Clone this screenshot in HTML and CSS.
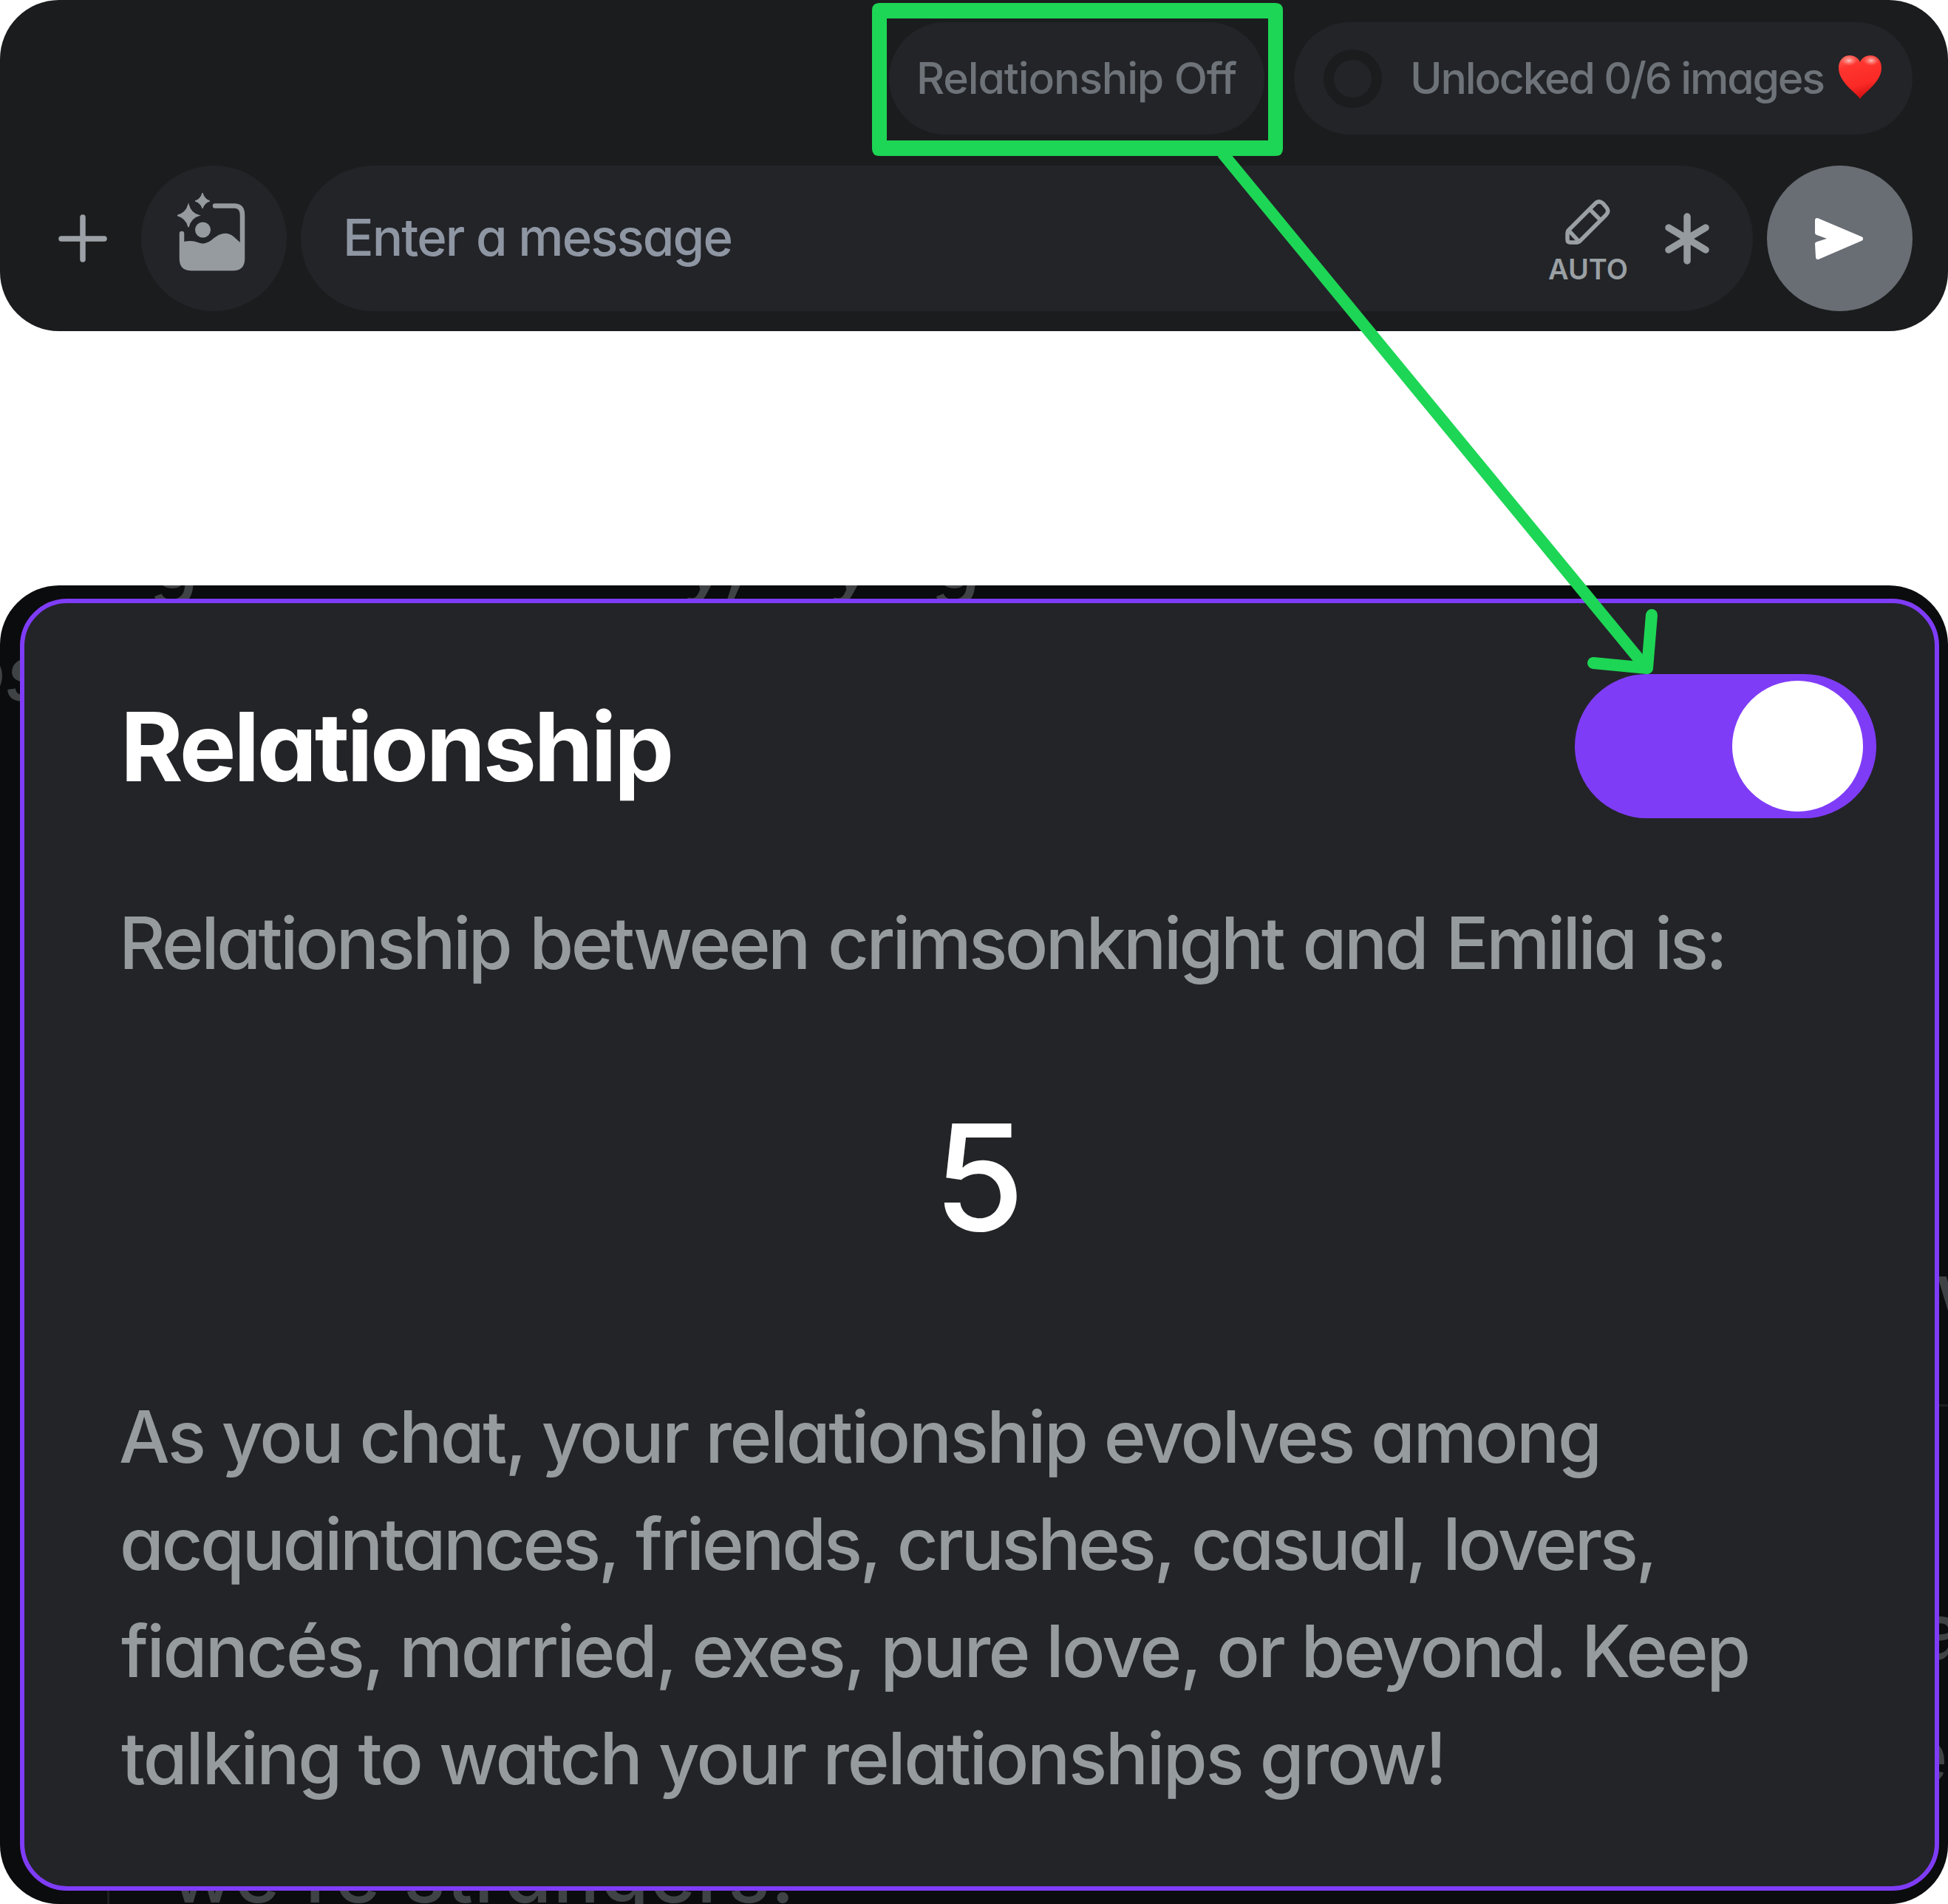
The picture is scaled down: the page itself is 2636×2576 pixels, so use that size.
FILE: index.html
```html
<!DOCTYPE html>
<html lang="en">
<head>
<meta charset="utf-8">
<title>Relationship setting</title>
<link rel="stylesheet" href="styles.css">
</head>
<body>
<main class="page">
  <section class="composer">
    <div class="chips">
      <div class="chip chip-relationship"><span class="chip-label label-off">Relationship Off</span></div>
      <div class="chip chip-images">
        <span class="ring"></span>
        <span class="chip-label label-unlocked">Unlocked 0/6 images</span>
        <svg class="heart" viewBox="0 0 60 62">
          <defs>
            <linearGradient id="heartFill" x1="0" y1="0" x2="0.3" y2="1">
              <stop offset="0" stop-color="#ff6a60"/><stop offset="0.3" stop-color="#ff352f"/><stop offset="0.75" stop-color="#fb2a26"/><stop offset="1" stop-color="#d81414"/>
            </linearGradient>
            <radialGradient id="heartShine"><stop offset="0" stop-color="#ffd0cb" stop-opacity=".9"/><stop offset="1" stop-color="#ff8a80" stop-opacity="0"/></radialGradient>
          </defs>
          <path fill="url(#heartFill)" d="M30 61C27 54 1 39 1 19C1 8 8 2 16 2C23 2 28 6 30 11C32 6 37 2 44 2C52 2 59 8 59 19C59 39 33 54 30 61Z"/>
          <ellipse cx="15" cy="9" rx="11" ry="7" fill="url(#heartShine)"/>
          <ellipse cx="45" cy="9" rx="11" ry="7" fill="url(#heartShine)"/>
        </svg>
      </div>
    </div>
    <div class="entry">
      <svg class="plus" viewBox="0 0 68 68"><path d="M34 5V62M5 34H63" fill="none" stroke="#9ba1a6" stroke-width="7.500" stroke-linecap="round"/></svg>
      <div class="round image-button">
        <svg viewBox="0 0 92 108" class="image-icon">
          <g fill="#969b9f">
            <path d="M15 16Q18 27.500 29 30.500Q18 33.500 15 46Q12 33.500 0 30.500Q12 27.500 15 16Z" stroke="#969b9f" stroke-width="1.500"/>
            <path d="M34 0Q36.500 8.500 44 11Q36.500 13.500 34 21Q31.500 13.500 24 11Q31.500 8.500 34 0Z" stroke="#969b9f" stroke-width="1"/>
            <circle cx="34.500" cy="50" r="10.500"/>
            <path d="M6 67Q18 63 28 67Q36 71 46 64C56 55 66 51 76 59L86 68V90Q86 103 74 103H19Q6 103 6 90Z"/>
          </g>
          <path d="M51 17.500H78Q88 18 88 30V89Q88 102 75 102H19Q6 102 6 89V55" fill="none" stroke="#969b9f" stroke-width="6.500" stroke-linecap="round"/>
        </svg>
      </div>
      <div class="field">
        <span class="placeholder">Enter a message</span>
        <div class="auto">
          <svg viewBox="0 0 62 62" class="pencil"><path d="M4 43L40 7Q45 1 51 6L56 12Q60 17 55 22L20 57Q18 59 14 59H7Q3 59 3 55V47Q3 44 4 43ZM33 14L48 29M5 43L18 57" fill="none" stroke="#9aa0a4" stroke-width="5.500" stroke-linejoin="round"/></svg>
          <span class="auto-label">AUTO</span>
        </div>
        <svg class="asterisk" viewBox="0 0 62 70"><path d="M31 5V65M6 20L56 50M56 20L6 50" fill="none" stroke="#969b9f" stroke-width="9.500" stroke-linecap="round"/></svg>
      </div>
      <div class="round send">
        <svg viewBox="0 0 68 60" class="send-icon"><path d="M4 5L63 30L5 55L4 37L26 30L4 22Z" fill="#fff" stroke="#fff" stroke-width="6" stroke-linejoin="round"/></svg>
      </div>
    </div>
  </section>

  <section class="stage">
    <div class="backdrop" aria-hidden="true">
      <span class="ghost slant g1">g</span>
      <span class="ghost slant g2">y,</span>
      <span class="ghost slant g3">y</span>
      <span class="ghost slant g4">g</span>
      <span class="ghost slant g5">os</span>
      <span class="ghost g6">w</span>
      <span class="ghost g7">a</span>
      <span class="ghost g8">e</span>
      <span class="ghost g9">we're strangers.</span>
      <span class="rule rule-right"></span>
      <span class="rule rule-bottom"></span>
    </div>
    <div class="modal">
      <header class="modal-head">
        <h1 class="title">Relationship</h1>
        <div class="toggle"><span class="knob"></span></div>
      </header>
      <p class="lead">Relationship between crimsonknight and Emilia is:</p>
      <div class="score">5</div>
      <p class="about">
        <span class="line-1">As you chat, your relationship evolves among</span><br>
        <span class="line-2">acquaintances, friends, crushes, casual, lovers,</span><br>
        <span class="line-3">fiancés, married, exes, pure love, or beyond. Keep</span><br>
        <span class="line-4">talking to watch your relationships grow!</span>
      </p>
    </div>
  </section>

  <svg class="annotation" viewBox="0 0 2636 2576">
    <path fill="#1dd655" fill-rule="evenodd" d="M1190 4H1726Q1736 4 1736 14V201Q1736 211 1726 211H1190Q1180 211 1180 201V14Q1180 4 1190 4ZM1200 25V190H1716V25Z"/>
    <path d="M1654 207L2228 904" fill="none" stroke="#1dd655" stroke-width="16"/>
    <path d="M2235 832L2229 904L2156 897" fill="none" stroke="#1dd655" stroke-width="16" stroke-linecap="round" stroke-linejoin="round"/>
  </svg>
</main>
</body>
</html>
```

FILE: styles.css
```css
* { box-sizing: border-box; }
body {
  margin: 0;
  background: #fff;
  font-family: Inter, "Liberation Sans", sans-serif;
  font-feature-settings: "cv11";
}
svg { display: block; flex: none; }
.page {
  position: relative;
  width: 2636px;
  height: 2576px;
  display: flex;
  flex-direction: column;
  justify-content: space-between;
  overflow: hidden;
}
.composer {
  height: 448px;
  padding: 30px 48px 27px 78px;
  border-radius: 80px;
  background: #1b1c1d;
  display: flex;
  flex-direction: column;
  justify-content: space-between;
}
.chips { display: flex; justify-content: flex-end; gap: 40px; }
.chip {
  height: 152px;
  border-radius: 76px;
  background: #232428;
  display: flex;
  align-items: center;
}
.chip-relationship { width: 508px; padding-left: 37px; }
.chip-images { width: 837px; padding-left: 40px; }
.chip-label { font-size: 59px; font-weight: 450; color: #6d7379; white-space: nowrap; margin-top: -2px; }
.label-off { letter-spacing: -1.16px; }
.label-unlocked { letter-spacing: -2.21px; }
.ring {
  width: 79px;
  height: 79px;
  border: 14px solid #1b1c1e;
  border-radius: 50%;
  margin-right: 38px;
}
.heart { width: 60px; height: 62px; margin: -5px 0 0 19px; }
.entry { display: flex; align-items: center; height: 197px; }
.plus { width: 68px; height: 68px; margin-right: 45px; }
.round {
  width: 197px;
  height: 197px;
  border-radius: 50%;
  background: #232428;
  display: flex;
  align-items: center;
  justify-content: center;
  flex: none;
}
.image-icon { width: 92px; height: 108px; margin: -15px 7px 0 0; }
.field {
  flex: 1;
  height: 197px;
  margin: 0 19px;
  padding: 0 58px 0 57px;
  border-radius: 99px;
  background: #232428;
  display: flex;
  align-items: center;
}
.placeholder {
  flex: none;
  margin-top: -3px;
  font-size: 69px;
  font-weight: 450;
  letter-spacing: -1.91px;
  color: #8f96a3;
  white-space: nowrap;
}
.auto {
  width: 110px;
  margin-left: auto;
  padding-top: 11px;
  display: flex;
  flex-direction: column;
  align-items: center;
}
.pencil { width: 62px; height: 62px; }
.auto-label { margin-top: 10px; font-size: 38px; line-height: 46px; font-weight: 600; color: #9aa0a4; }
.asterisk { width: 62px; height: 70px; margin-left: 48px; }
.send { background: #696d74; }
.send-icon { width: 68px; height: 60px; margin-left: -2px; }

.stage {
  position: relative;
  height: 1784px;
  padding: 18px 12px 18px 27px;
  border-radius: 80px;
  background: #0b0c0d;
  overflow: hidden;
}
.ghost {
  position: absolute;
  font-size: 105px;
  line-height: 120px;
  font-weight: 500;
  color: #404345;
  white-space: nowrap;
}
.slant { font-style: italic; }
.g1 { left: 208px; top: -93px; }
.g2 { left: 928px; top: -93px; }
.g3 { left: 1126px; top: -93px; }
.g4 { left: 1266px; top: -93px; }
.g5 { left: -56px; top: 58px; }
.g6 { left: 2619px; top: 894px; }
.g7 { left: 2596px; top: 1355px; font-feature-settings: normal; }
.g8 { left: 2574px; top: 1522px; }
.g9 { left: 230px; top: 1684px; letter-spacing: 1.6px; }
.rule { position: absolute; background: #1c1e1f; }
.rule-right { right: 0; top: 1108px; width: 14px; height: 3px; }
.rule-bottom { left: 145px; bottom: 0; width: 3px; height: 18px; }
.modal {
  position: relative;
  height: 1748px;
  padding: 96px 79px 0 128px;
  border: 6px solid #7f3cf7;
  border-radius: 64px;
  background: #232428;
}
.modal-head { display: flex; align-items: center; justify-content: space-between; height: 195px; }
.title {
  margin: 0 0 0 2px;
  font-size: 129px;
  line-height: 156px;
  font-weight: 700;
  letter-spacing: -3.4px;
  color: #fff;
}
.toggle {
  width: 408px;
  height: 195px;
  padding-right: 18px;
  border-radius: 98px;
  background: #7f3cf7;
  display: flex;
  align-items: center;
  justify-content: flex-end;
}
.knob { width: 177px; height: 177px; border-radius: 50%; background: #fff; }
.lead, .about { margin: 0; font-size: 97px; line-height: 145px; font-weight: 500; color: #969b9e; white-space: nowrap; }
.lead { margin-top: 96px; letter-spacing: -3.6px; word-spacing: 4px; }
.score {
  margin: 120px 50px 0 0;
  font-size: 199px;
  line-height: 249px;
  font-weight: 500;
  color: #fff;
  text-align: center;
}
.about { margin-top: 154px; }
.line-1 { letter-spacing: -2.54px; }
.line-2 { letter-spacing: -3.45px; word-spacing: 3px; margin-left: 1px; }
.line-3 { letter-spacing: -2.57px; margin-left: 3px; }
.line-4 { letter-spacing: -2.36px; margin-left: 3px; }
.annotation { position: absolute; left: 0; top: 0; width: 2636px; height: 2576px; }
```
